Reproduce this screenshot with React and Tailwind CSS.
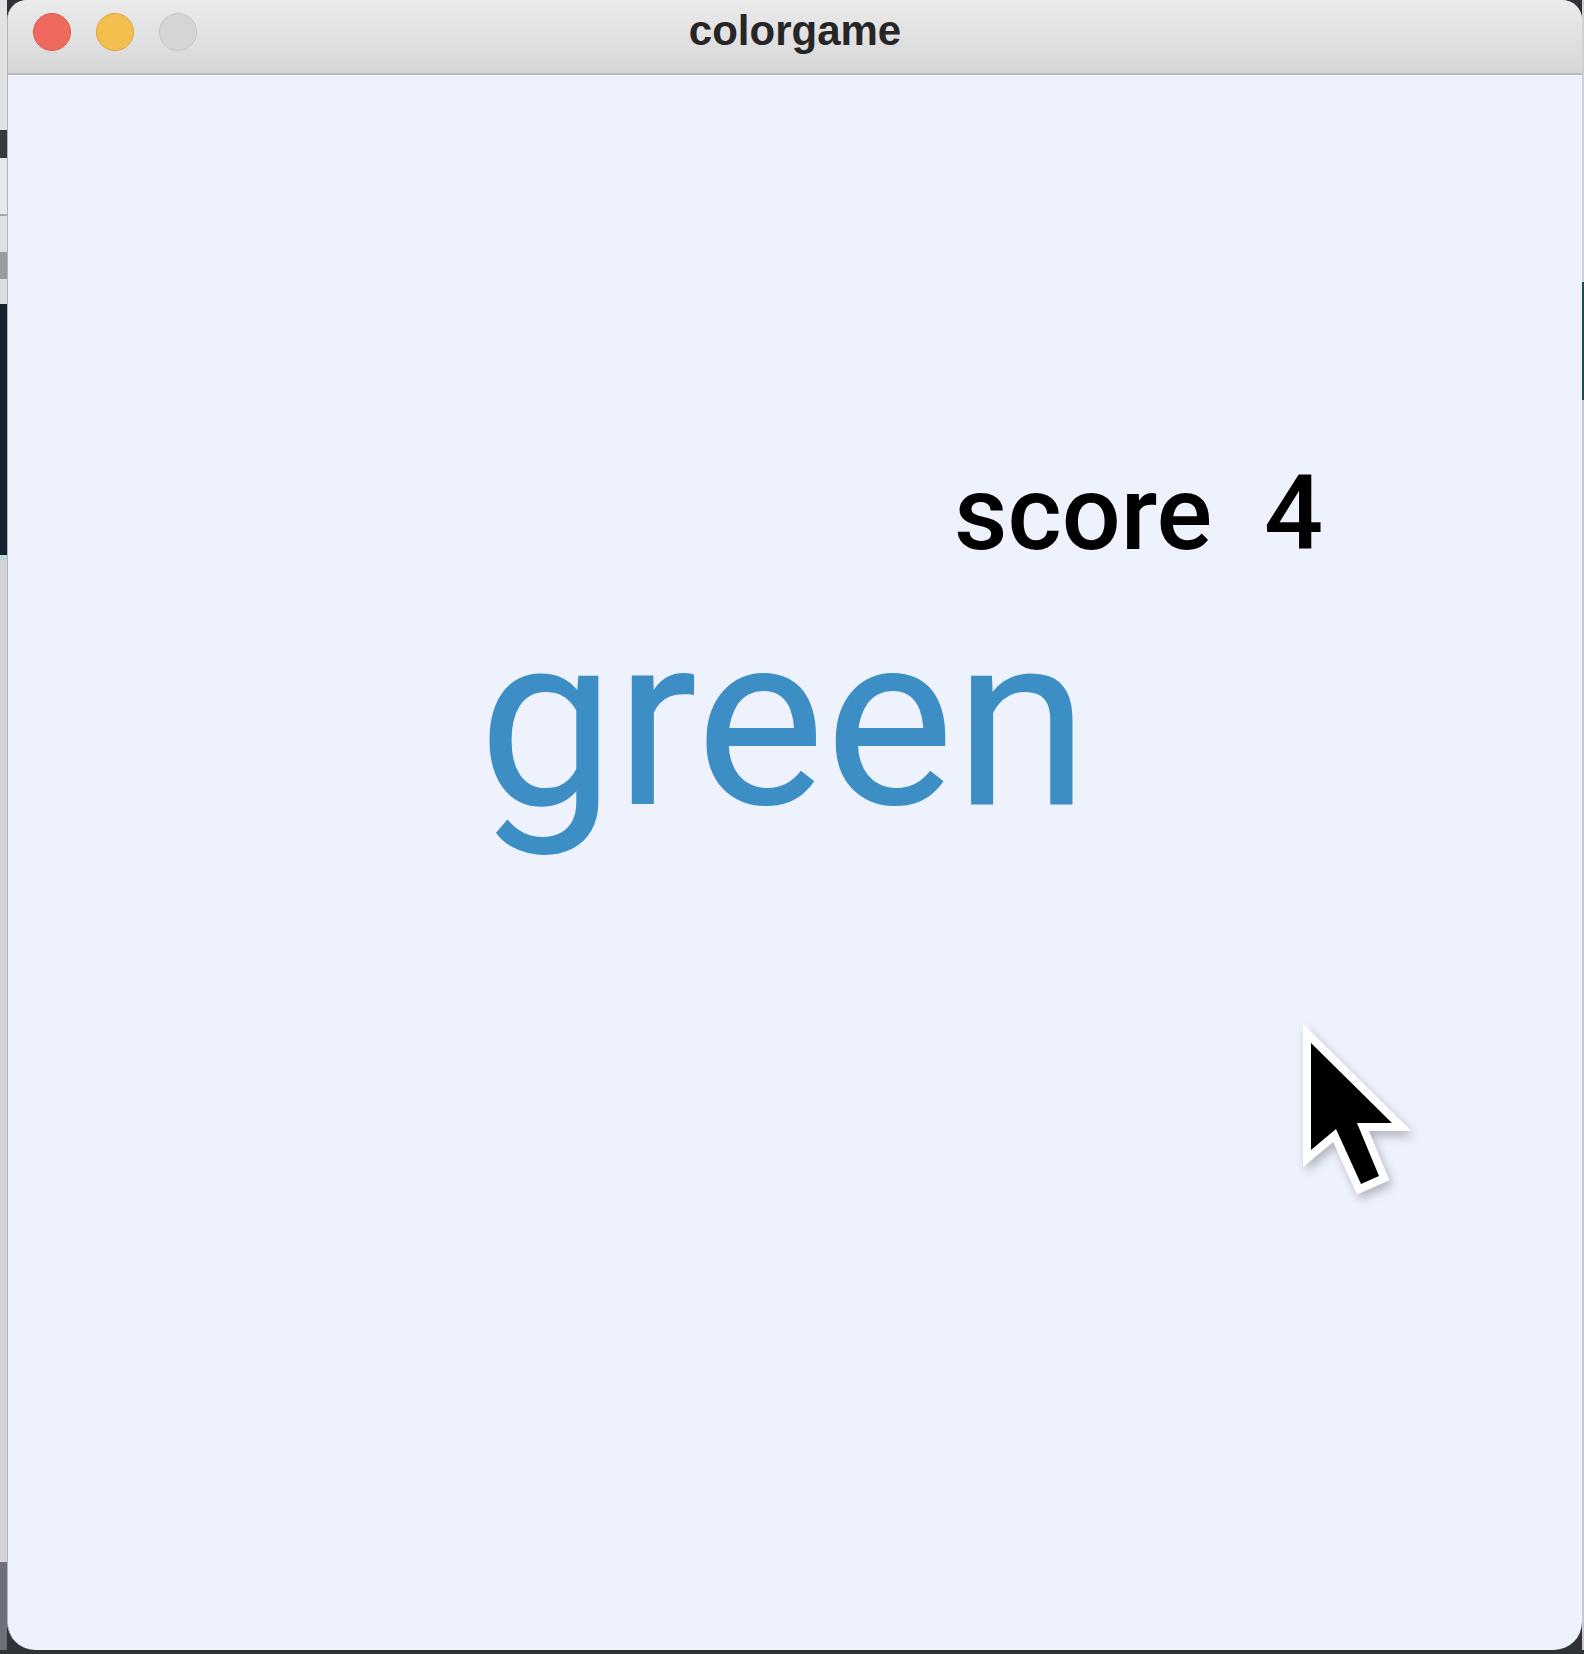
export default function App() {
  return (
    <div className="flex h-[1654px] w-[1584px] flex-col overflow-hidden bg-[#2f3338]">
      <div className="flex h-[1650px]">
        {/* desktop peeking out at the left */}
        <div className="flex w-[7px] flex-col">
          <div className="h-[130px] bg-[#e2e2e2]" />
          <div className="h-[28px] bg-[#3a3a3a]" />
          <div className="h-[56px] bg-[#e8e8e8]" />
          <div className="h-[2px] bg-[#a8a8a8]" />
          <div className="h-[36px] bg-[#e0e0e0]" />
          <div className="h-[27px] bg-[#9a9a9a]" />
          <div className="h-[25px] bg-[#dedede]" />
          <div className="h-[251px] bg-[#14212e]" />
          <div className="h-[5px] bg-[#bcd6d6]" />
          <div className="h-[1002px] bg-[#d2d4d6]" />
          <div className="flex-1 bg-[#6b7079]" />
        </div>

        {/* window */}
        <div className="flex flex-1 flex-col overflow-hidden rounded-t-[20px] rounded-b-[28px] border-l border-[#b5b5b5] bg-[#eef2fd]">
          <div className="relative flex h-[75px] shrink-0 items-start justify-center border-b-2 border-[#bdbdbd] bg-gradient-to-b from-[#ebebeb] to-[#d7d7d7] pt-[10px]">
            <div className="absolute left-[25px] top-[13px] flex gap-[25px]">
              <span className="h-[38px] w-[38px] rounded-full border border-[#d9574e] bg-[#ee6a5f]" />
              <span className="h-[38px] w-[38px] rounded-full border border-[#dea33c] bg-[#f5bf4f]" />
              <span className="h-[38px] w-[38px] rounded-full border border-[#c4c4c4] bg-[#d5d5d5]" />
            </div>
            <span className="font-['Liberation_Sans',Arial,sans-serif] text-[42px] font-bold leading-none text-[#262626]">
              colorgame
            </span>
          </div>

          {/* game canvas */}
          <div className="relative flex-1">
            <span className="absolute left-[946px] top-[387px] whitespace-pre font-['Roboto',sans-serif] text-[104px] font-medium leading-none text-black">
              score  4
            </span>
            <span className="absolute left-[470px] top-[524px] font-['Roboto',sans-serif] text-[244px] leading-none text-[#3d8ec5]">
              green
            </span>
            <svg
              className="absolute left-[1288px] top-[940px] drop-shadow-[3px_5px_5px_rgba(0,0,0,0.25)]"
              width="140"
              height="200"
              viewBox="1295 1015 140 200"
            >
              <path
                d="M1310 1043 L1310 1150 L1335 1129 L1360 1184 L1378 1176 L1356 1123 L1391 1123 Z"
                fill="black"
                stroke="white"
                strokeWidth="16"
                strokeLinejoin="miter"
                paintOrder="stroke"
              />
            </svg>
          </div>
        </div>

        {/* desktop peeking out at the right */}
        <div className="flex w-[2px] flex-col">
          <div className="h-[282px] bg-[#d0d0d0]" />
          <div className="h-[118px] bg-[#1f4b4f]" />
          <div className="flex-1 bg-[#c8c8c8]" />
        </div>
      </div>
      <div className="h-[4px] bg-[#2f3338]" />
    </div>
  );
}
